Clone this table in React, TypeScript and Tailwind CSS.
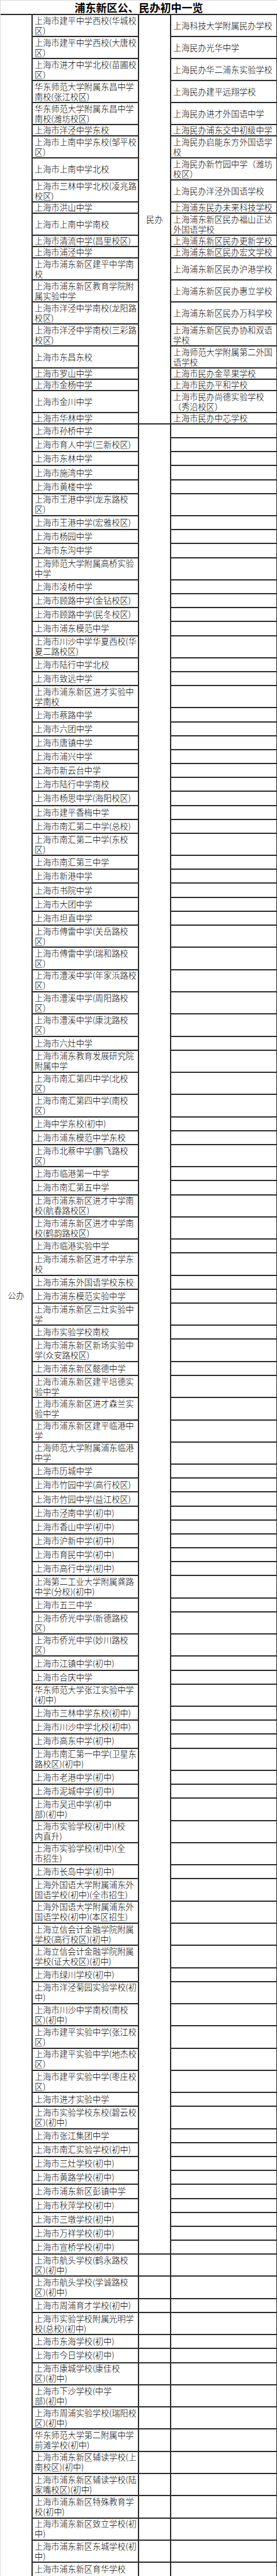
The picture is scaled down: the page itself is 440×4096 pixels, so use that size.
import React from "react";

// 上段：公办与民办并列
const upper: [string, string][] = [
  ["上海市建平中学西校(华城校\n区)", "上海科技大学附属民办学校"],
  ["上海市建平中学西校(大唐校\n区)", "上海民办光华中学"],
  ["上海市进才中学北校(苗圃校\n区)", "上海民办华二浦东实验学校"],
  ["华东师范大学附属东昌中学\n南校(张江校区)", "上海民办建平远翔学校"],
  ["华东师范大学附属东昌中学\n南校(潍坊校区)", "上海民办进才外国语中学"],
  ["上海市洋泾中学东校", "上海民办浦东交中初级中学"],
  ["上海市上南中学东校(邹平校\n区)", "上海民办启能东方外国语学\n校"],
  ["上海市上南中学北校", "上海民办新竹园中学（潍坊\n校区）"],
  ["上海市三林中学北校(凌兆路\n校区)", "上海民办洋泾外国语学校"],
  ["上海市洪山中学", "上海浦东民办未来科技学校"],
  ["上海市上南中学南校", "上海浦东新区民办福山正达\n外国语学校"],
  ["上海市清流中学(昌里校区)", "上海浦东新区民办更新学校"],
  ["上海市浦泾中学", "上海浦东新区民办宏文学校"],
  ["上海市浦东新区建平中学南\n校", "上海浦东新区民办沪港学校"],
  ["上海市浦东新区教育学院附\n属实验中学", "上海浦东新区民办惠立学校"],
  ["上海市洋泾中学南校(龙阳路\n校区)", "上海浦东新区民办万科学校"],
  ["上海市洋泾中学南校(三彩路\n校区)", "上海浦东新区民办协和双语\n学校"],
  ["上海市东昌东校", "上海师范大学附属第二外国\n语学校"],
  ["上海市罗山中学", "上海市民办金苹果学校"],
  ["上海市金杨中学", "上海市民办平和学校"],
  ["上海市金川中学", "上海市民办尚德实验学校\n（秀沿校区）"],
  ["上海市华林中学", "上海市民办中芯学校"],
];

// 中段：第三列合并为一格
const middle: string[] = [
  "上海市孙桥中学",
  "上海市育人中学(三新校区)",
  "上海市东林中学",
  "上海市施湾中学",
  "上海市黄楼中学",
  "上海市王港中学(龙东路校\n区)",
  "上海市王港中学(宏雅校区)",
  "上海市杨园中学",
  "上海市东沟中学",
  "上海师范大学附属高桥实验\n中学",
  "上海市凌桥中学",
  "上海市顾路中学(金钻校区)",
  "上海市顾路中学(民冬校区)",
  "上海市浦东模范中学",
  "上海市川沙中学华夏西校(华\n夏二路校区)",
  "上海市陆行中学北校",
  "上海市致远中学",
  "上海市浦东新区进才实验中\n学南校",
  "上海市蔡路中学",
  "上海市六团中学",
  "上海市唐镇中学",
  "上海市浦兴中学",
  "上海市新云台中学",
  "上海市陆行中学南校",
  "上海市杨思中学(海阳校区)",
  "上海市建平香梅中学",
  "上海市南汇第二中学(总校)",
  "上海市南汇第二中学(东校\n区)",
  "上海市南汇第三中学",
  "上海市新港中学",
  "上海市书院中学",
  "上海市大团中学",
  "上海市坦直中学",
  "上海市傅雷中学(关岳路校\n区)",
  "上海市傅雷中学(瑞和路校\n区)",
  "上海市澧溪中学(年家浜路校\n区)",
  "上海市澧溪中学(周阳路校\n区)",
  "上海市澧溪中学(康沈路校\n区)",
  "上海市六灶中学",
  "上海市浦东教育发展研究院\n附属中学",
  "上海市南汇第四中学(北校\n区)",
  "上海市南汇第四中学(南校\n区)",
  "上海中学东校(初中)",
  "上海市浦东模范中学东校",
  "上海市北蔡中学(鹏飞路校\n区)",
  "上海市临港第一中学",
  "上海市南汇第五中学",
  "上海市浦东新区进才中学南\n校(航春路校区)",
  "上海市浦东新区进才中学南\n校(鹤韵路校区)",
  "上海市临港实验中学",
  "上海市浦东新区进才中学东\n校",
  "上海市浦东外国语学校东校",
  "上海市浦东模范实验中学",
  "上海市浦东新区三灶实验中\n学",
  "上海市实验学校南校",
  "上海市浦东新区新场实验中\n学(众安路校区)",
  "上海市浦东新区懿德中学",
  "上海市浦东新区建平培德实\n验中学",
  "上海市浦东新区进才森兰实\n验中学",
  "上海市浦东新区建平临港中\n学",
  "上海师范大学附属浦东临港\n中学",
  "上海市历城中学",
  "上海市竹园中学(高行校区)",
  "上海市竹园中学(益江校区)",
  "上海市泾南中学(初中)",
  "上海市香山中学(初中)",
  "上海市沪新中学(初中)",
  "上海市育民中学(初中)",
  "上海市高行中学(初中)",
  "上海第二工业大学附属龚路\n中学(分校)(初中)",
  "上海市五三中学",
  "上海市侨光中学(新德路校\n区)",
  "上海市侨光中学(妙川路校\n区)",
  "上海市江镇中学(初中)",
  "上海市合庆中学",
  "华东师范大学张江实验中学\n(初中)",
  "上海市三林中学东校(初中)",
  "上海市川沙中学北校(初中)",
  "上海市高东中学(初中)",
  "上海市南汇第一中学(卫星东\n路校区)(初中)",
  "上海市老港中学(初中)",
  "上海市泥城中学(初中)",
  "上海市吴迅中学(初中\n部)(初中)",
  "上海市实验学校(初中)(校\n内直升)",
  "上海市实验学校(初中)(全\n市招生)",
  "上海市长岛中学(初中)",
  "上海外国语大学附属浦东外\n国语学校(初中)(全市招生)",
  "上海外国语大学附属浦东外\n国语学校(初中)(本区招生)",
  "上海立信会计金融学院附属\n学校(高行校区)(初中)",
  "上海立信会计金融学院附属\n学校(证大校区)(初中)",
  "上海市绿川学校(初中)",
  "上海市洋泾菊园实验学校(初\n中)",
  "上海市川沙中学南校(南校\n区)(初中)",
  "上海市建平实验中学(张江校\n区)",
  "上海市建平实验中学(地杰校\n区)",
  "上海市建平实验中学(枣庄校\n区)",
  "上海市进才实验中学",
  "上海市实验学校东校(碧云校\n区)(初中)",
  "上海市张江集团中学",
  "上海市南汇实验学校(初中)",
  "上海市三灶学校(初中)",
  "上海市黄路学校(初中)",
  "上海市浦东新区彭镇中学",
  "上海市秋萍学校(初中)",
  "上海市三墩学校(初中)",
  "上海市万祥学校(初中)",
  "上海市宣桥学校(初中)",
];

// 下段：第三列逐行分格
const lower: string[] = [
  "上海市航头学校(鹤永路校\n区)(初中)",
  "上海市航头学校(学诚路校\n区)(初中)",
  "上海市周浦育才学校(初中)",
  "上海市实验学校附属光明学\n校(总校)(初中)",
  "上海市东海学校(初中)",
  "上海市今日学校(初中)",
  "上海市康城学校(康佳校\n区)(初中)",
  "上海市下沙学校(中学\n部)(初中)",
  "上海市周浦实验学校(瑞阳校\n区)(初中)",
  "华东师范大学第二附属中学\n前滩学校(初中)",
  "上海市浦东新区辅读学校(上\n南校区)(初中)",
  "上海市浦东新区辅读学校(陆\n家嘴校区)(初中)",
  "上海市浦东新区特殊教育学\n校(初中)",
  "上海市浦东新区致立学校(初\n中)",
  "上海市浦东新区东城学校(初\n中)",
  "上海市浦东新区育华学校",
];

const total = upper.length + middle.length + lower.length;

const cell =
  "border-2 border-[#2e2e2e] pl-[3px] pr-0 align-middle whitespace-pre text-[13.15px] leading-[16px] font-light text-black";
const empty = "border-2 border-[#2e2e2e]";

export default function App() {
  return (
    <div className="w-[440px] bg-white border-l border-t border-[#dcdcdc] font-['Noto_Sans_CJK_SC',sans-serif]">
      <table className="table-fixed border-collapse w-[439px]">
        <colgroup>
          <col className="w-[50px]" />
          <col className="w-[169px]" />
          <col className="w-[51px]" />
          <col className="w-[169px]" />
        </colgroup>
        <tbody>
          <tr className="h-[22px]">
            <td
              colSpan={4}
              className="border-b-2 border-[#2e2e2e] text-center align-middle text-[17px] leading-none font-bold text-black"
            >
              浦东新区公、民办初中一览
            </td>
          </tr>

          {upper.map(([left, right], i) => (
            <tr
              key={"u" + i}
              className={left.includes("\n") || right.includes("\n") ? "h-[35px]" : "h-[18px]"}
            >
              {i === 0 && (
                <td
                  rowSpan={total}
                  className="border-b-2 border-[#2e2e2e] text-center align-middle text-[13.15px] font-light text-black"
                >
                  公办
                </td>
              )}
              <td className={cell}>{left}</td>
              {i === 0 && (
                <td
                  rowSpan={upper.length}
                  className="border-2 border-[#2e2e2e] text-center align-middle text-[13.15px] font-light text-black"
                >
                  民办
                </td>
              )}
              <td className={cell}>{right}</td>
            </tr>
          ))}

          {middle.map((name, i) => (
            <tr key={"m" + i} className={name.includes("\n") ? "h-[35.32px]" : "h-[22.16px]"}>
              <td className={cell}>{name}</td>
              {i === 0 && <td rowSpan={middle.length} className={empty} />}
              <td className={empty} />
            </tr>
          ))}

          {lower.map((name, i) => (
            <tr key={"l" + i} className={name.includes("\n") ? "h-[35.32px]" : "h-[22.16px]"}>
              <td className={cell}>{name}</td>
              <td className={empty} />
              <td className={empty} />
            </tr>
          ))}
        </tbody>
      </table>
    </div>
  );
}
